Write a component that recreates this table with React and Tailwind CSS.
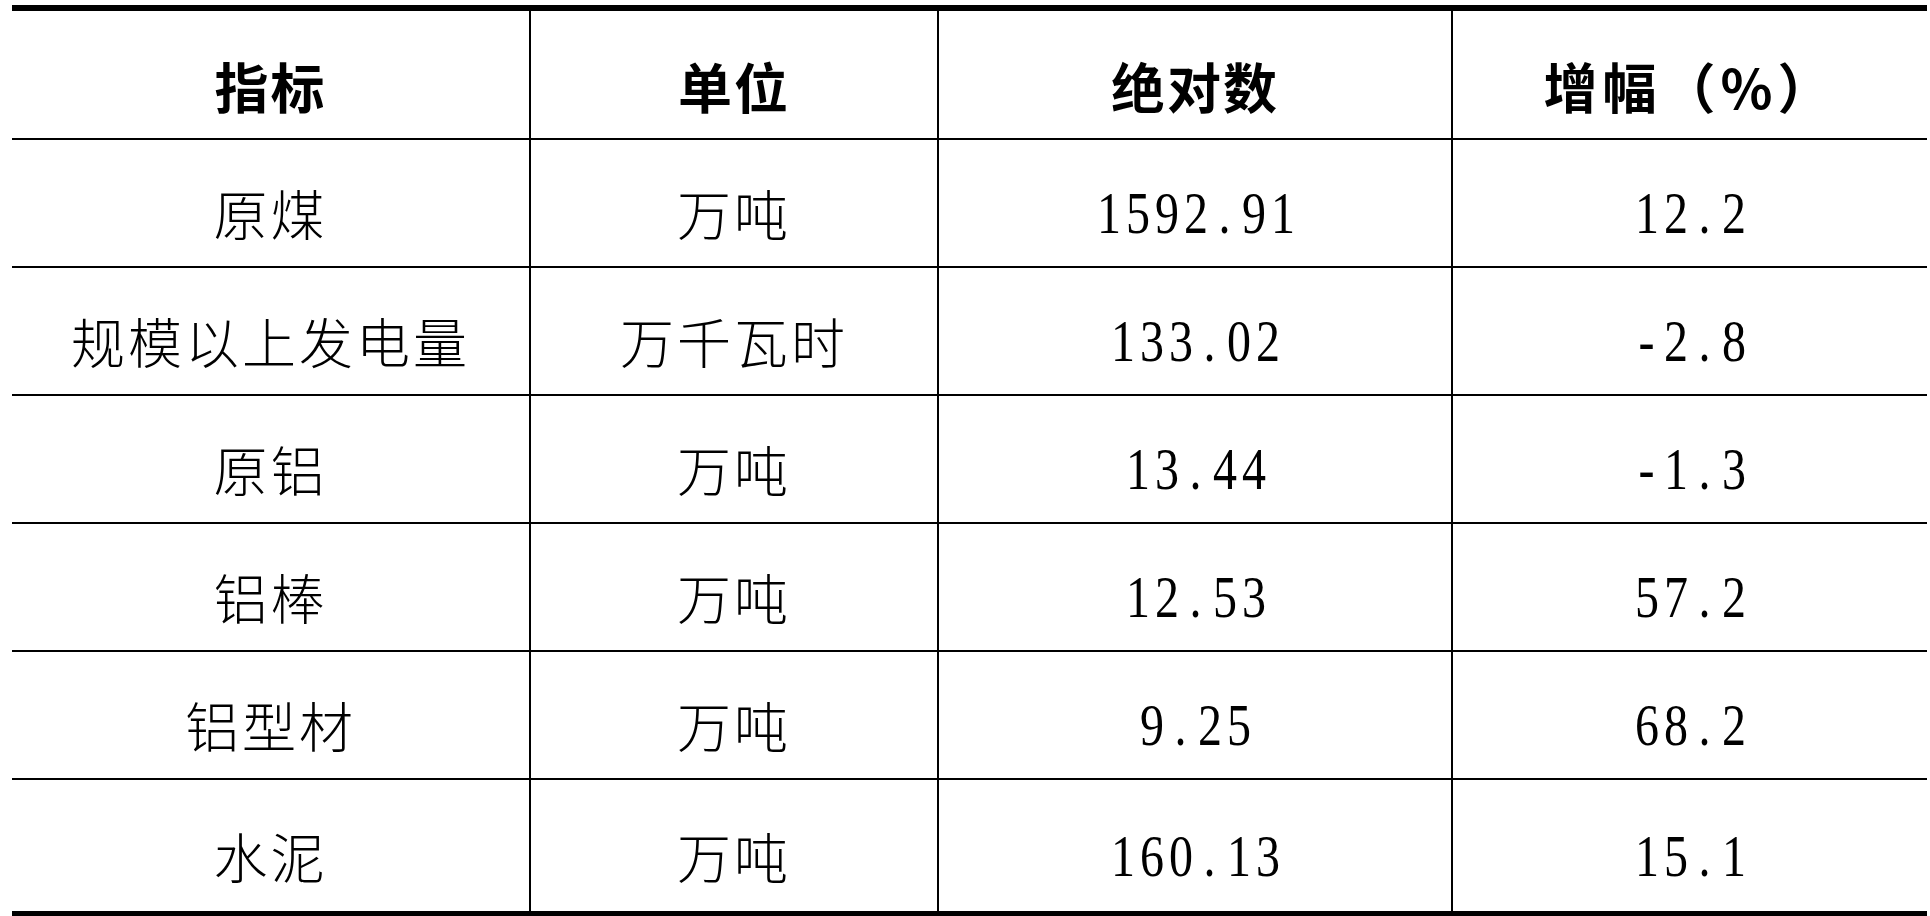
import React from "react";

const headers = ["指标", "单位", "绝对数", "增幅（%）"];

const rows = [
  ["原煤", "万吨", "1592.91", "12.2"],
  ["规模以上发电量", "万千瓦时", "133.02", "-2.8"],
  ["原铝", "万吨", "13.44", "-1.3"],
  ["铝棒", "万吨", "12.53", "57.2"],
  ["铝型材", "万吨", "9.25", "68.2"],
  ["水泥", "万吨", "160.13", "15.1"],
];

const cjk = { fontFamily: "'Noto Sans CJK SC', sans-serif" };
const serif = { fontFamily: "'Liberation Serif', serif" };

// digits in the source are half-width, so every char gets the same box
function Num({ value }) {
  return (
    <span className="flex text-[60px] leading-none" style={serif}>
      {value.split("").map((c, i) => (
        <span key={i} className="inline-block w-[29px] text-center scale-x-80">
          {c}
        </span>
      ))}
    </span>
  );
}

function Cell({ col, last, children }) {
  return (
    <div
      className={
        "flex items-center justify-center pt-[20px] border-black" +
        (col < 3 ? " border-r-2" : "") +
        (last ? "" : " border-b-2")
      }
    >
      {children}
    </div>
  );
}

export default function App() {
  return (
    <div className="min-h-screen bg-white pt-[5px] pl-[12px] text-black">
      <div className="w-[1915px] border-y-[6px] border-black grid grid-cols-[519px_408px_514px_474px] grid-rows-[129px_128px_128px_128px_128px_128px_131px]">
        {headers.map((h, i) => (
          <Cell key={h} col={i}>
            <span
              className={
                "text-[54px] leading-none font-bold pt-[2px] " +
                (i === 3 ? "tracking-[5px]" : "tracking-[2px]")
              }
              style={cjk}
            >
              {h}
            </span>
          </Cell>
        ))}
        {rows.map((r, ri) =>
          r.map((v, ci) => (
            <Cell key={ri + "-" + ci} col={ci} last={ri === rows.length - 1}>
              {ci < 2 ? (
                <span
                  className="text-[54px] leading-none font-light tracking-[3px]"
                  style={cjk}
                >
                  {v}
                </span>
              ) : (
                <Num value={v} />
              )}
            </Cell>
          ))
        )}
      </div>
    </div>
  );
}
